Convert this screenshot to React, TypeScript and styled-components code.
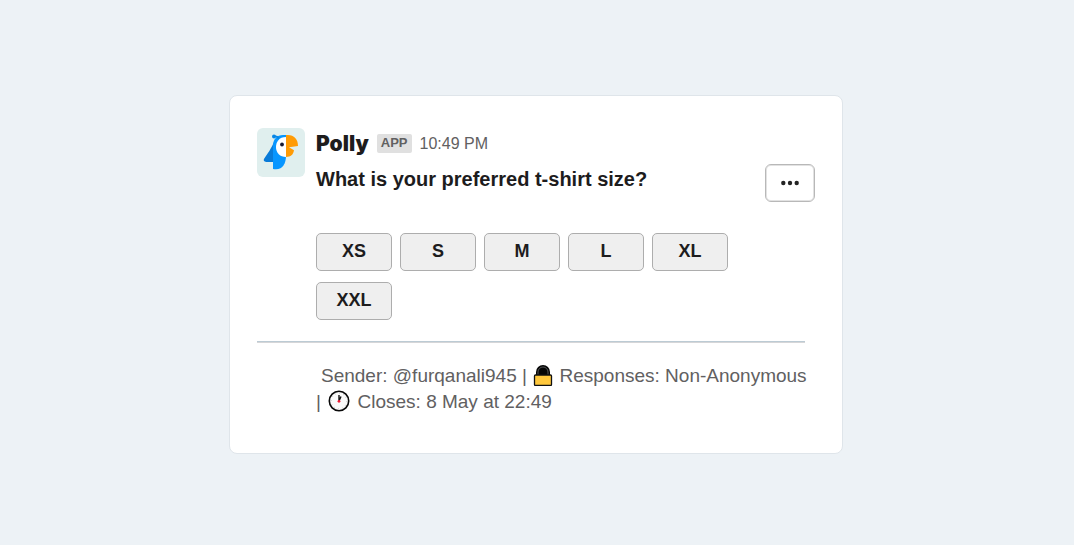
import React from "react";
import styled, { createGlobalStyle } from "styled-components";

const GlobalStyle = createGlobalStyle`
  *, *::before, *::after { box-sizing: border-box; }
  body {
    margin: 0;
    background: #edf2f6;
    color: #1d1c1d;
    font-family: "Liberation Sans", Arial, sans-serif;
  }
`;

const Page = styled.main`
  min-height: 100vh;
  display: flex;
  align-items: center;
  justify-content: center;
  padding: 24px 26px 20px 24px;
`;

const Card = styled.article`
  width: 100%;
  max-width: 614px;
  padding: 32px 27px 38px;
  background: #fff;
  border: 1px solid #dfe5ea;
  border-radius: 8px;
`;

const Message = styled.div`
  display: flex;
  gap: 11px;
`;

const Avatar = styled.svg`
  flex: none;
  width: 48px;
  height: 49px;
`;

const Content = styled.div`
  flex: 1;
  min-width: 0;
`;

const Header = styled.header`
  display: flex;
  align-items: center;
  height: 32px;
`;

const Name = styled.span`
  font: 900 21px/32px Inter, sans-serif;
`;

const Badge = styled.span`
  margin: 0 8px 2px;
  padding: 0 4px 2px;
  border-radius: 2px;
  background: #e0e0e0;
  color: #616061;
  font-size: 13px;
  font-weight: 700;
  line-height: 17px;
`;

const Time = styled.time`
  color: #616061;
  font-size: 16px;
`;

const QuestionRow = styled.div`
  display: flex;
  align-items: flex-start;
  justify-content: space-between;
  gap: 16px;
  padding-top: 4px;
`;

const Question = styled.h1`
  margin: 0;
  font-size: 20px;
  font-weight: 700;
  line-height: 30px;
`;

const MenuButton = styled.button`
  flex: none;
  display: grid;
  place-items: center;
  width: 50px;
  height: 38px;
  padding: 0;
  border: 1px solid #b8b8b8;
  border-radius: 6px;
  background: #fff;
  box-shadow: inset 0 0 0 1px #e2e2e2;
  cursor: pointer;
`;

const Options = styled.div`
  display: flex;
  flex-wrap: wrap;
  gap: 11px 8px;
  margin-top: 31px;
  padding-right: 64px;
`;

const Option = styled.button`
  width: 76px;
  height: 38px;
  padding: 0 0 2px;
  border: 1px solid #adadad;
  border-radius: 5px;
  background: #efefef;
  color: #1d1c1d;
  font: 700 18px/34px "Liberation Sans", Arial, sans-serif;
  cursor: pointer;
`;

const Divider = styled.hr`
  height: 2px;
  margin: 21px 10px 20px 0;
  border: 0;
  border-top: 1px solid #bccbd4;
  background: #d6d6d8;
`;

const Details = styled.p`
  margin: 0 0 0 59px;
  color: #616061;
  font-size: 19px;
  line-height: 26px;
`;

const Sender = styled.span`
  margin-left: 5px;
`;

const InlineIcon = styled.svg<{ $space?: number }>`
  width: 22px;
  height: 22px;
  margin: 0 ${({ $space = 0 }) => $space}px;
  vertical-align: -4px;
`;

const sizes = ["XS", "S", "M", "L", "XL", "XXL"];

function Parrot() {
  return (
    <Avatar viewBox="0 0 48 49" role="img" aria-label="Polly">
      <rect width="48" height="49" rx="6" fill="#e0efee" />
      <path d="M17 14 C14 21 11 25 7 31 C6 33 8 34 10 34 H18 L21 18Z" fill="#087bd8" />
      <path d="M29 7 H26 C20 7 16 11 16 18 V41 C25 43 29 36 29 28Z" fill="#0796ff" />
      <path d="M22 11 Q21 8 17 8.5" fill="none" stroke="#0786e6" strokeWidth="1.8" />
      <circle cx="17" cy="8.5" r="2" fill="#0786e6" />
      <path d="M29 9 C22 9 19 14 19 19 C19 25 23 29 29 29Z" fill="#fff" />
      <circle cx="25" cy="16.5" r="1.9" fill="#171a35" />
      <path d="M29 7 H31 C37 7 41 11 41 18 L32 19.3 L37 22.3 C36 27 34 29 29 29Z" fill="#ff9b05" />
    </Avatar>
  );
}

function Lock() {
  return (
    <InlineIcon viewBox="0 0 22 22" aria-hidden="true">
      <path d="M4 12V8a7 7 0 0 1 14 0v4Z" fill="#050505" />
      <path d="M6 12V8a5 5 0 0 1 10 0v4" fill="none" stroke="#66686a" strokeWidth="0.8" />
      <rect x="2.5" y="11" width="17" height="10.5" rx="1" fill="#ffc83d" stroke="#111" strokeWidth="1.3" />
    </InlineIcon>
  );
}

function Clock() {
  return (
    <InlineIcon $space={2} viewBox="0 0 22 22" aria-hidden="true">
      <circle cx="11" cy="11" r="9.7" fill="#fafafa" stroke="#080808" strokeWidth="1.6" />
      <circle cx="11" cy="11" r="7.8" fill="none" stroke="#aaa" strokeWidth="1" strokeDasharray="0.6 3.48" />
      <path d="M11 11V5M11 11L13 6.5" stroke="#111" strokeWidth="1.4" />
      <circle cx="11" cy="11.3" r="1.4" fill="#ed1c35" />
    </InlineIcon>
  );
}

function Dots() {
  return (
    <svg width="20" height="6" viewBox="0 0 20 6" aria-hidden="true" fill="#242424">
      <circle cx="3.3" cy="3" r="2.2" />
      <circle cx="10" cy="3" r="2.2" />
      <circle cx="16.7" cy="3" r="2.2" />
    </svg>
  );
}

export default function App() {
  return (
    <>
      <GlobalStyle />
      <Page>
        <Card>
          <Message>
            <Parrot />
            <Content>
              <Header>
                <Name>Polly</Name>
                <Badge>APP</Badge>
                <Time dateTime="22:49">10:49 PM</Time>
              </Header>
              <QuestionRow>
                <Question>What is your preferred t-shirt size?</Question>
                <MenuButton type="button" aria-label="More actions">
                  <Dots />
                </MenuButton>
              </QuestionRow>
              <Options>
                {sizes.map((size) => (
                  <Option key={size} type="button">{size}</Option>
                ))}
              </Options>
            </Content>
          </Message>
          <Divider />
          <Details>
            <Sender>Sender: @furqanali945</Sender> | <Lock /> Responses: Non-Anonymous
            {" "}| <Clock /> Closes: 8 May at 22:49
          </Details>
        </Card>
      </Page>
    </>
  );
}
